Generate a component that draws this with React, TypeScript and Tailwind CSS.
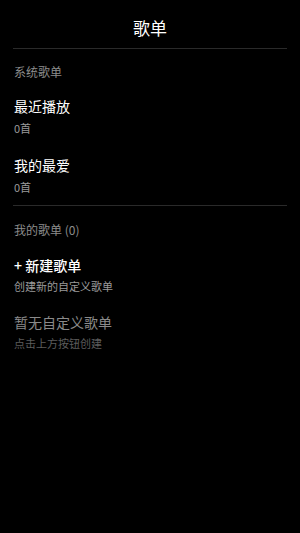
export default function App() {
  const font = { fontFamily: '"Noto Sans CJK SC", "Noto Sans", sans-serif' };
  return (
    <div className="w-[300px] h-[533px] bg-black text-white px-[13px]" style={font}>
      <div className="h-[49px] pt-2 flex items-center justify-center border-b border-[#2a2a2a]">
        <span className="text-[17px] leading-[24px] text-white">歌单</span>
      </div>
      <div className="px-px">
        <div className="mt-[15px] text-[12px] leading-[16px] text-[#8c8c8c]">系统歌单</div>
        <div className="mt-4 flex flex-col gap-1">
          <div className="text-[14px] leading-[20px] text-white">最近播放</div>
          <div className="text-[11px] leading-[16px] text-[#9a9a9a]">0首</div>
        </div>
        <div className="mt-[19px] flex flex-col gap-1">
          <div className="text-[14px] leading-[20px] text-white">我的最爱</div>
          <div className="text-[11px] leading-[16px] text-[#9a9a9a]">0首</div>
        </div>
      </div>
      <div className="mt-[10px] border-t border-[#2a2a2a]" />
      <div className="px-px">
        <div className="mt-[16px] text-[12px] leading-[16px] text-[#8c8c8c]">我的歌单 (0)</div>
        <div className="mt-[17px] flex flex-col gap-[3px]">
          <div className="text-[14px] leading-[20px] text-white font-medium">+ 新建歌单</div>
          <div className="text-[11px] leading-[16px] text-[#9a9a9a]">创建新的自定义歌单</div>
        </div>
        <div className="mt-[18px] flex flex-col gap-[3px]">
          <div className="text-[14px] leading-[20px] text-[#8a8a8a]">暂无自定义歌单</div>
          <div className="text-[11px] leading-[16px] text-[#5c5c5c]">点击上方按钮创建</div>
        </div>
      </div>
    </div>
  );
}
